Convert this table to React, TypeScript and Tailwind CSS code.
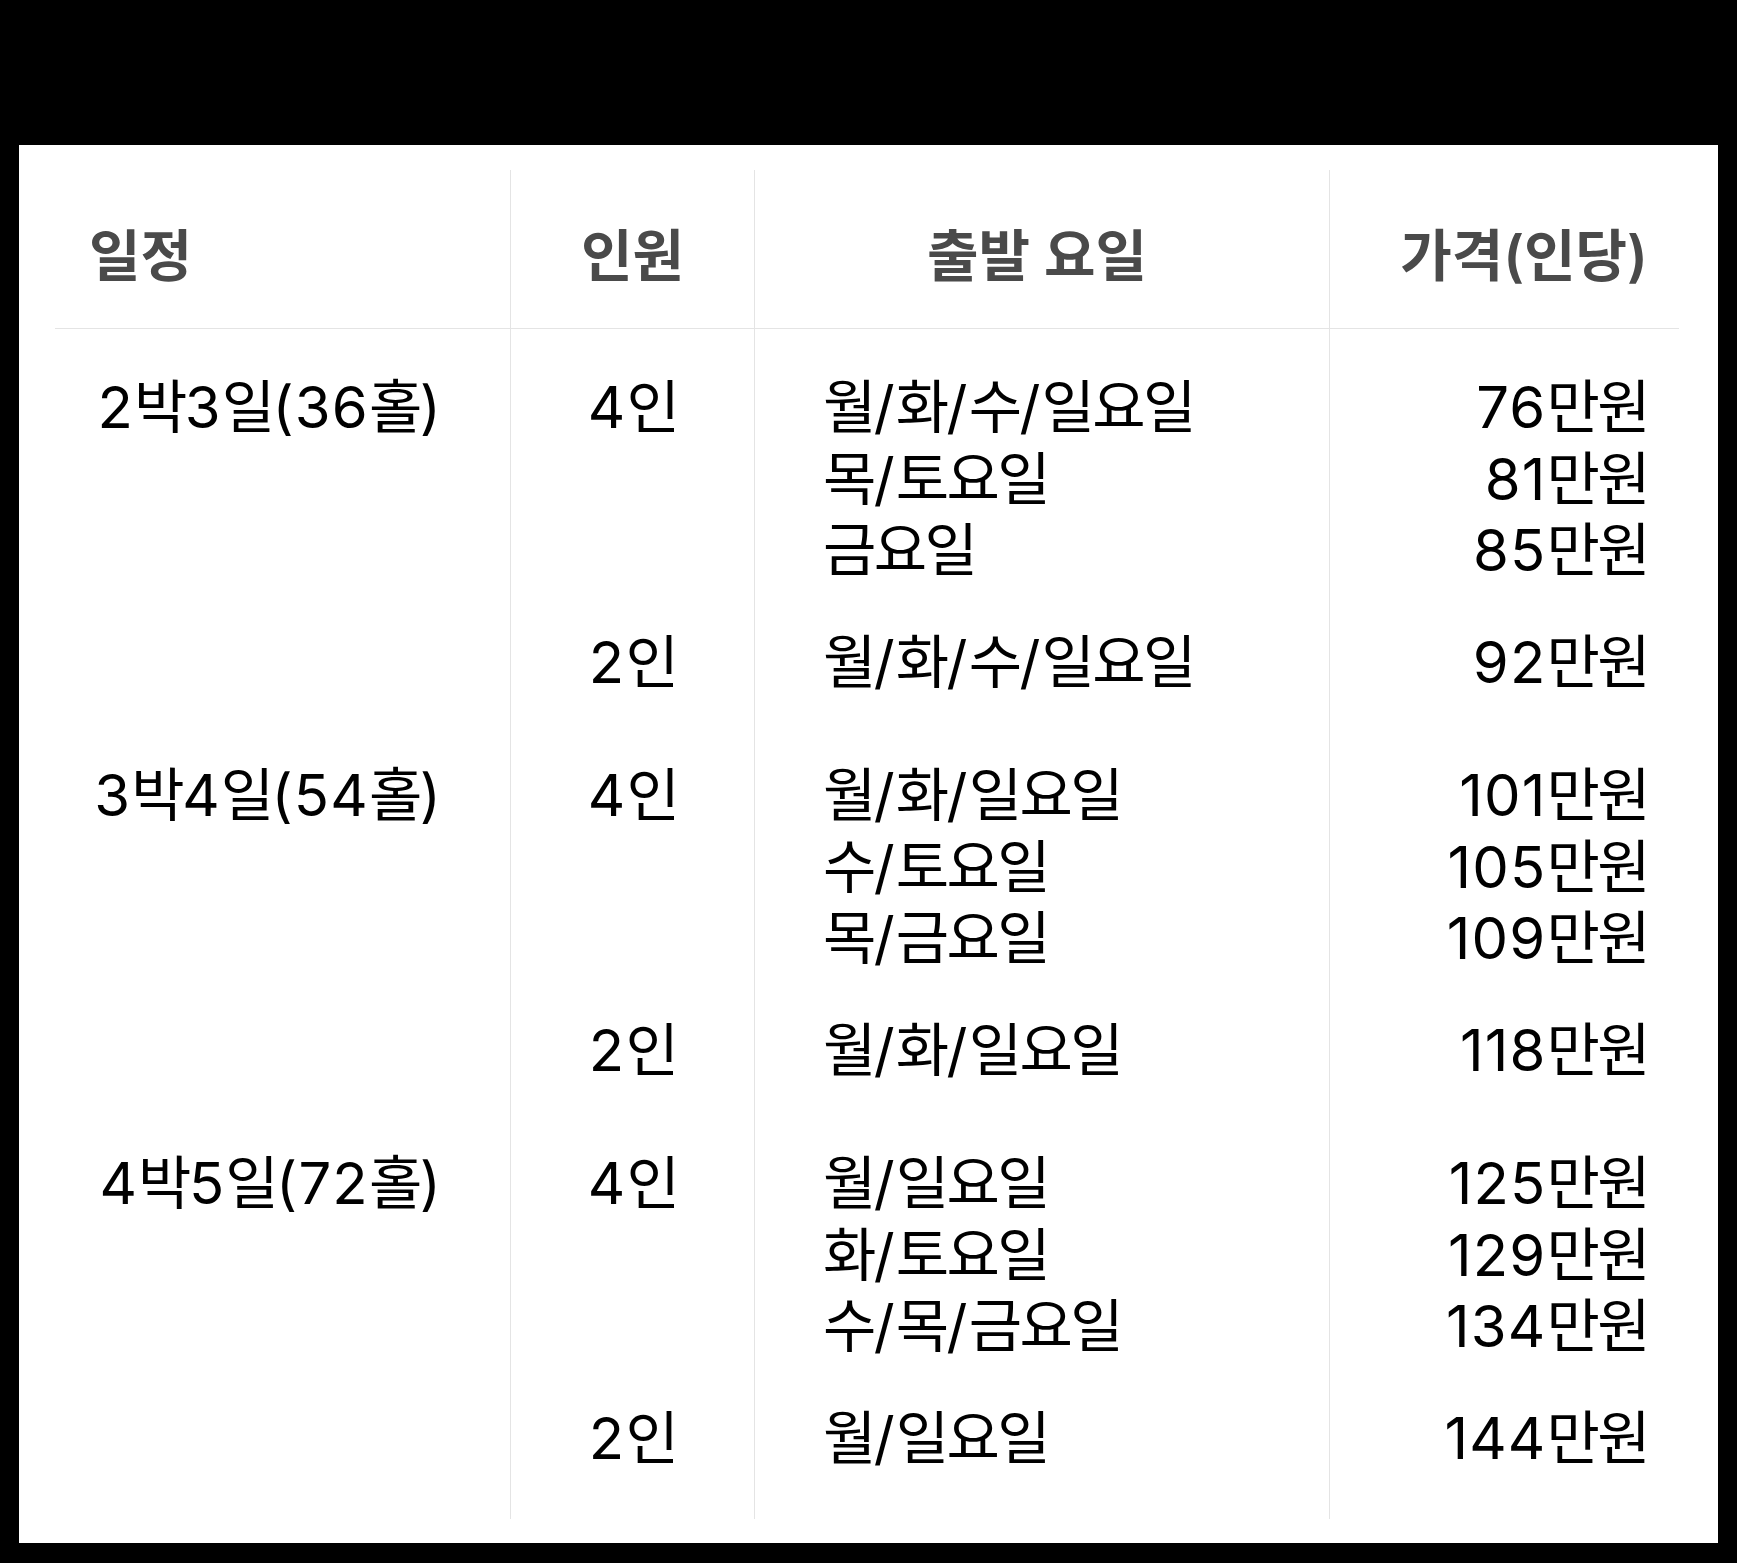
import React from "react";

type Sub = { people: string; days: string[]; prices: string[] };
type Group = { schedule: string; subs: Sub[] };

const groups: Group[] = [
  {
    schedule: "2박3일(36홀)",
    subs: [
      { people: "4인", days: ["월/화/수/일요일", "목/토요일", "금요일"], prices: ["76만원", "81만원", "85만원"] },
      { people: "2인", days: ["월/화/수/일요일"], prices: ["92만원"] },
    ],
  },
  {
    schedule: "3박4일(54홀)",
    subs: [
      { people: "4인", days: ["월/화/일요일", "수/토요일", "목/금요일"], prices: ["101만원", "105만원", "109만원"] },
      { people: "2인", days: ["월/화/일요일"], prices: ["118만원"] },
    ],
  },
  {
    schedule: "4박5일(72홀)",
    subs: [
      { people: "4인", days: ["월/일요일", "화/토요일", "수/목/금요일"], prices: ["125만원", "129만원", "134만원"] },
      { people: "2인", days: ["월/일요일"], prices: ["144만원"] },
    ],
  },
];

function T({ text }: { text: string }) {
  const parts = text.match(/[\uAC00-\uD7A3]+|[^\uAC00-\uD7A3]+/g) || [];
  return (
    <span>
      {parts.map((p, i) =>
        /[\uAC00-\uD7A3]/.test(p) ? (
          <span key={i} className="tracking-[-0.045em]">
            {p}
          </span>
        ) : (
          <span key={i} className="tracking-[0.02em]">
            {p}
          </span>
        )
      )}
    </span>
  );
}

export default function App() {
  const rows: React.ReactNode[] = [];
  groups.forEach((g, gi) => {
    g.subs.forEach((s, si) => {
      const first = si === 0;
      const lastRow = gi === groups.length - 1 && si === g.subs.length - 1;
      const pt = first ? (gi === 0 ? "pt-[43px]" : "pt-[62px]") : "pt-[40px]";
      const pb = lastRow ? "pb-[45px]" : "pb-0";
      const key = `${gi}-${si}`;
      rows.push(
        <div key={key + "a"} className={`${pt} ${pb} pr-[68px] text-right`}>
          {first ? <T text={g.schedule} /> : ""}
        </div>,
        <div key={key + "b"} className={`${pt} ${pb} border-l border-[#e4e4e4] text-center`}>
          <T text={s.people} />
        </div>,
        <div key={key + "c"} className={`${pt} ${pb} border-l border-[#e4e4e4] pl-[68px] flex flex-col`}>
          {s.days.map((d) => (
            <T key={d} text={d} />
          ))}
        </div>,
        <div key={key + "d"} className={`${pt} ${pb} border-l border-[#e4e4e4] pr-[31px] flex flex-col items-end`}>
          {s.prices.map((p) => (
            <T key={p} text={p} />
          ))}
        </div>
      );
    });
  });

  const head = "h-[159px] border-b border-[#e4e4e4] flex items-center pt-[14px] text-[56px] font-semibold text-[#4a4a4a]";

  return (
    <div
      className="w-full h-[1563px] bg-black pt-[145px] px-[19px] pb-[20px]"
      style={{ fontFamily: 'Inter, "Noto Sans CJK KR", "Noto Sans", sans-serif' }}
    >
      <div className="h-full bg-white pt-[25px] pl-[36px] pr-[39px]">
        <div className="grid grid-cols-[455px_244px_575px_350px]">
          <div className={`${head} pl-[34px]`}>일정</div>
          <div className={`${head} border-l justify-center`}>인원</div>
          <div className={`${head} border-l justify-center pr-[10px]`}>출발 요일</div>
          <div className={`${head} border-l justify-end pr-[31px]`}>가격(인당)</div>
          <div className="contents text-[58px] leading-[71.5px] text-black">{rows}</div>
        </div>
      </div>
    </div>
  );
}
